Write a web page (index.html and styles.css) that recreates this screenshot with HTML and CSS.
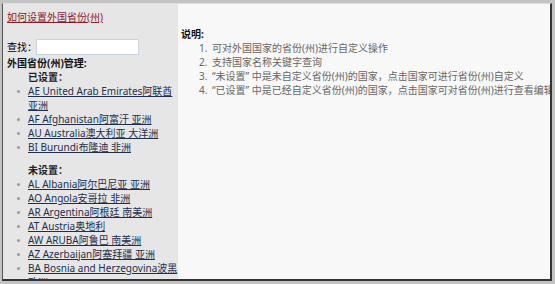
FILE: index.html
```html
<!DOCTYPE html>
<html lang="zh-CN">
<head>
    <meta charset="UTF-8">
    <title>外国省份(州)管理</title>
    <link rel="stylesheet" href="styles.css">
</head>
<body>
    <div class="frame">
        <div class="side">
            <a class="help" href="#">如何设置外国省份(州)</a>
            <div class="find">
                <span>查找：</span>
                <input type="text" class="find-input">
            </div>
            <h4 class="title">外国省份(州)管理:</h4>
            <h5 class="group">已设置：</h5>
            <ul class="countries">
                <li><a href="#">AE United Arab Emirates阿联酋 亚洲</a></li>
                <li><a href="#">AF Afghanistan阿富汗 亚洲</a></li>
                <li><a href="#">AU Australia澳大利亚 大洋洲</a></li>
                <li><a href="#">BI Burundi布隆迪 非洲</a></li>
            </ul>
            <h5 class="group gap">未设置：</h5>
            <ul class="countries">
                <li><a href="#">AL Albania阿尔巴尼亚 亚洲</a></li>
                <li><a href="#">AO Angola安哥拉 非洲</a></li>
                <li><a href="#">AR Argentina阿根廷 南美洲</a></li>
                <li><a href="#">AT Austria奥地利</a></li>
                <li><a href="#">AW ARUBA阿鲁巴 南美洲</a></li>
                <li><a href="#">AZ Azerbaijan阿塞拜疆 亚洲</a></li>
                <li><a href="#">BA Bosnia and Herzegovina波黑 欧洲</a></li>
                <li><a href="#">BB Barbados巴巴多斯 北美洲</a></li>
            </ul>
        </div>
        <div class="main">
            <h4 class="title">说明:</h4>
            <ol class="notes">
                <li>可对外国国家的省份(州)进行自定义操作</li>
                <li>支持国家名称关键字查询</li>
                <li>“未设置” 中是未自定义省份(州)的国家，点击国家可进行省份(州)自定义</li>
                <li>“已设置” 中是已经自定义省份(州)的国家，点击国家可对省份(州)进行查看编辑</li>
            </ol>
        </div>
    </div>
</body>
</html>
```

FILE: styles.css
```css
body {
    margin: 3px 3px 3px 2px;
    background: #c3c3c3;
    font-family: "Noto Sans", "Noto Sans CJK SC", sans-serif;
    font-size: 10px;
    line-height: 14px;
}
.frame {
    display: grid;
    grid-template-columns: 175px 1fr;
    height: 275px;
    overflow: hidden;
    border-top: 1px solid #e0e0e0;
    border-left: 1px solid #555;
    border-right: 2px solid #333;
    border-bottom: 2px solid #333;
}
.side {
    background: #e6e6e6;
    padding: 6px 0 0 4px;
    overflow: hidden;
}
.main {
    background: #f8f8f8;
    padding: 22px 0 0 3px;
    overflow: hidden;
}
.help {
    display: block;
    height: 14px;
    color: #8b1a2b;
}
.find {
    display: flex;
    align-items: center;
    height: 16px;
    margin-top: 15px;
}
.find span {
    flex-shrink: 0;
    width: 29px;
    white-space: nowrap;
}
.find-input {
    box-sizing: border-box;
    width: 103px;
    height: 16px;
    margin: 0;
    padding: 1px;
    border: 1px solid #c8d4e0;
    background: #fff;
}
.title {
    height: 14px;
    margin: 1px 0 0;
    font-size: 10px;
    font-weight: bold;
    color: #111;
}
.group {
    height: 14px;
    margin: 0;
    padding-left: 21px;
    font-size: 10px;
    font-weight: bold;
    color: #222;
}
.group.gap {
    margin-top: 9px;
}
.countries {
    margin: 0;
    padding-left: 21px;
    list-style: none;
}
.countries li {
    position: relative;
}
.countries li::before {
    content: "";
    position: absolute;
    left: -11px;
    top: 6px;
    width: 3px;
    height: 3px;
    border-radius: 50%;
    background: #999;
}
.countries a {
    color: #1e2f4d;
}
.notes {
    margin: 0;
    padding-left: 18px;
    color: #666;
    white-space: nowrap;
    list-style: none;
    counter-reset: note;
}
.notes li {
    height: 14px;
    counter-increment: note;
}
.notes li::before {
    content: counter(note) ".";
    display: inline-block;
    width: 13px;
}
```
